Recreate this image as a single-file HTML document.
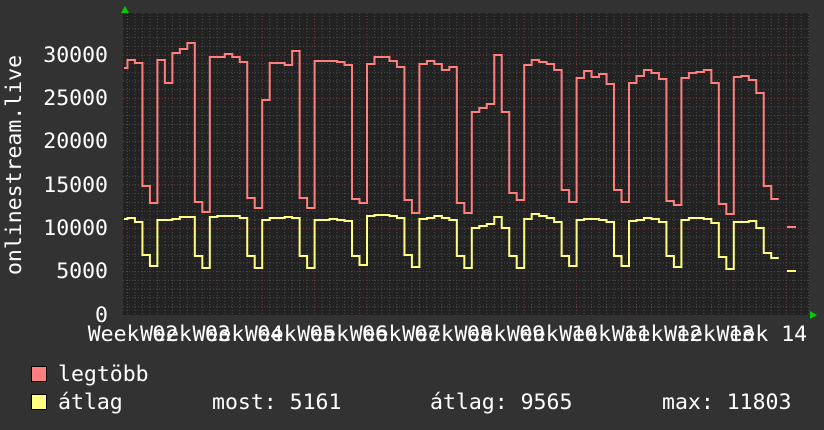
<!DOCTYPE html>
<html><head><meta charset="utf-8"><style>
html,body{margin:0;padding:0;background:#333;}
svg{display:block}
text{font-family:"DejaVu Sans Mono","Liberation Mono",monospace;fill:#fff;font-size:21.5px}
</style></head><body>
<svg id="s" width="824" height="430" viewBox="0 0 824 430" xmlns="http://www.w3.org/2000/svg">
<rect width="824" height="430" fill="#323232"/>
<rect x="123" y="13" width="686" height="302" fill="#222"/>
<g id="grid"></g>
<polygon points="121,13 129,13 125,6" fill="#0c0"/>
<polygon points="810,311 810,319 817,315" fill="#0c0"/>
<g id="data"></g>
<g text-anchor="end">
<text x="108" y="62">30000</text>
<text x="108" y="105">25000</text>
<text x="108" y="148">20000</text>
<text x="108" y="192">15000</text>
<text x="108" y="235">10000</text>
<text x="108" y="278">5000</text>
<text x="108" y="322">0</text>
</g>
<text transform="translate(21,165) rotate(-90)" text-anchor="middle">onlinestream.live</text>
<g id="wk" text-anchor="middle"></g>
<rect x="31.5" y="366.5" width="15" height="15" fill="#ff7f7f" stroke="#000"/>
<rect x="31.5" y="394.5" width="15" height="15" fill="#ffff7f" stroke="#000"/>
<text x="58" y="381">legtöbb</text>
<text x="58" y="409">átlag</text>
<text x="212" y="409">most: 5161</text>
<text x="430" y="409">átlag: 9565</text>
<text x="662" y="409">max: 11803</text>
</svg>
<script>
var NS="http://www.w3.org/2000/svg";
function el(p,t,a){var e=document.createElementNS(NS,t);for(var k in a)e.setAttribute(k,a[k]);p.appendChild(e);return e;}
var g=document.getElementById('grid');
var W=52.4,D=W/7,B0=105;
for(var i=0;i<200;i++){var x=B0+D*i;if(x<124)continue;if(x>809)break;
 var major=(i%7==0);el(g,'line',{x1:x,x2:x,y1:13,y2:315,stroke:major?'#7a3a3a':'#4a4a4a','stroke-dasharray':'1,2','stroke-width':1});}
for(var v=1000;v<=33000;v+=1000){var y=315-v*0.008667;if(y<13)break;
 var major=(v%5000==0);el(g,'line',{x1:123,x2:809,y1:y,y2:y,stroke:major?'#7a3a3a':'#4a4a4a','stroke-dasharray':'1,2','stroke-width':1});}
var pink=[
 [null,null,68,60,63,186,203],
 [60,83,53,49,43,202,212],
 [57,57,54,57,62,198,208],
 [100,63,63,65,51,198,208],
 [61,61,61,62,65,199,203],
 [64,57,57,61,67,200,213],
 [64,61,64,70,67,203,213],
 [112,108,104,55,112,193,200],
 [65,60,62,64,70,190,202],
 [78,71,77,74,84,190,202],
 [83,76,70,73,79,201,205],
 [78,73,72,70,83,204,214],
 [77,76,80,93,186,199,null]];
var yel=[
 [null,null,219,218,222,255,266],
 [220,220,219,217,217,256,268],
 [217,216,216,216,218,256,268],
 [220,218,218,217,218,256,268],
 [220,220,219,220,221,256,265],
 [216,215,215,216,218,255,267],
 [219,218,216,218,220,256,268],
 [228,226,224,217,228,256,268],
 [219,214,216,218,222,256,266],
 [220,219,219,220,222,256,266],
 [221,220,218,219,222,256,267],
 [220,218,218,219,223,257,269],
 [222,222,221,228,253,258,null]];
function path(arr,col){var d='';var started=false;
 for(var w=0;w<arr.length;w++)for(var k=0;k<7;k++){var y=arr[w][k];if(y==null)continue;
  var x0=B0+W*w+D*k,x1=x0+D;if(x0<124)x0=124;
  if(!started){d+='M'+x0+','+y;started=true;}else d+='L'+x0+','+y;
  d+='L'+x1+','+y;}
 el(document.getElementById('data'),'path',{d:d,fill:'none',stroke:col,'stroke-width':2});}
path(pink,'#ff7f7f');path(yel,'#ffff7f');
el(document.getElementById('data'),'line',{x1:787,x2:796,y1:227,y2:227,stroke:'#ff7f7f','stroke-width':2});
el(document.getElementById('data'),'line',{x1:787,x2:796,y1:271,y2:271,stroke:'#ffff7f','stroke-width':2});
var wk=document.getElementById('wk');
for(var n=2;n<=14;n++){var t=el(wk,'text',{x:133+W*(n-2),y:341});t.textContent='Week '+(n<10?'0'+n:n);}
</script>
</body></html>
